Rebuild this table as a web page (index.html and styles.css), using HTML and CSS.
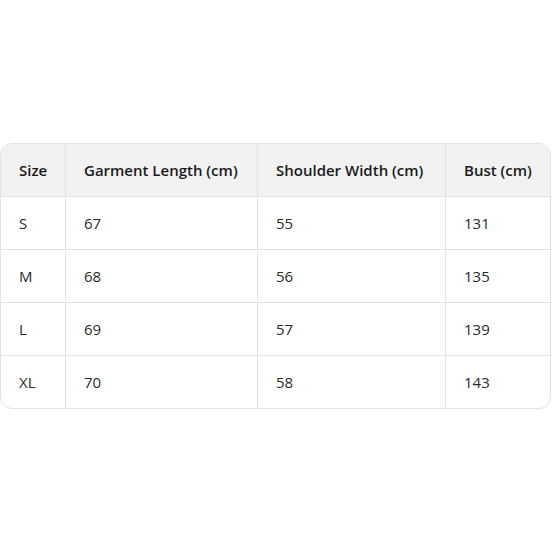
FILE: index.html
```html
<!DOCTYPE html>
<html>
<head>
<meta charset="utf-8">
<link rel="stylesheet" href="styles.css">
</head>
<body>
<div class="page">
  <div class="card">
    <table class="sizes">
      <thead>
        <tr><th class="c1">Size</th><th class="c2">Garment Length (cm)</th><th class="c3">Shoulder Width (cm)</th><th class="c4">Bust (cm)</th></tr>
      </thead>
      <tbody>
        <tr><td>S</td><td>67</td><td>55</td><td>131</td></tr>
        <tr><td>M</td><td>68</td><td>56</td><td>135</td></tr>
        <tr><td>L</td><td>69</td><td>57</td><td>139</td></tr>
        <tr class="last"><td>XL</td><td>70</td><td>58</td><td>143</td></tr>
      </tbody>
    </table>
  </div>
</div>
</body>
</html>
```
FILE: styles.css
```css
html, body {
  margin: 0;
  padding: 0;
  background: #ffffff;
}
.page {
  width: 556px;
  height: 556px;
  padding-top: 143px;
  box-sizing: border-box;
}
.card {
  width: 551px;
  box-sizing: border-box;
  border: 1px solid #e3e3e3;
  border-radius: 12px;
  overflow: hidden;
}
.sizes {
  width: 100%;
  border-collapse: separate;
  border-spacing: 0;
  table-layout: fixed;
  font-family: "Open Sans", "Noto Sans", sans-serif;
  font-size: 15px;
  color: #1f1f1f;
}
.sizes th, .sizes td {
  height: 53px;
  padding: 0 0 0 18px;
  text-align: left;
  vertical-align: middle;
  border-right: 1px solid #e3e3e3;
  border-bottom: 1px solid #e3e3e3;
  box-sizing: border-box;
}
.sizes th:last-child, .sizes td:last-child { border-right: none; }
.sizes tr.last td { border-bottom: none; height: 52px; }
.sizes th {
  background: #f2f2f2;
  font-weight: 600;
  color: #1a1a1a;
}
.sizes td { font-weight: 400; color: #2a2a2a; }
.c1 { width: 65px; }
.c2 { width: 192px; }
.c3 { width: 188px; }
```
